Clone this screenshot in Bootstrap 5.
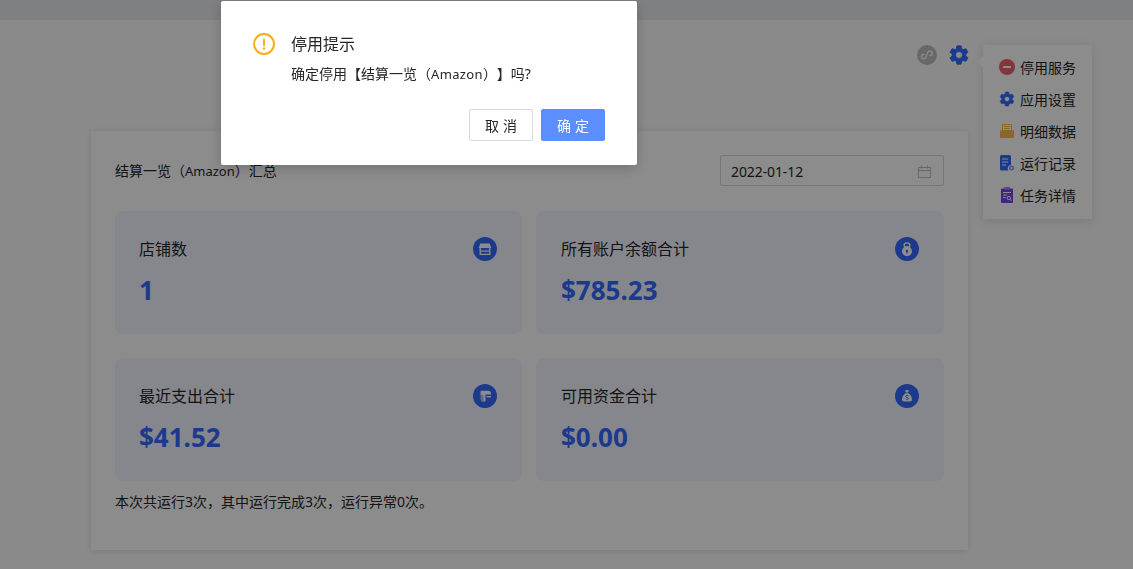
<!DOCTYPE html>
<html lang="zh-CN">
<head>
<meta charset="utf-8">
<title>结算一览（Amazon）汇总</title>
<link href="https://cdn.jsdelivr.net/npm/bootstrap@5.3.0/dist/css/bootstrap.min.css" rel="stylesheet">
<style>
html,body{height:569px;overflow:hidden}
body{background:#fbfbfb;color:#262626;font-family:"Noto Sans","Noto Sans CJK SC",sans-serif;font-size:14px;text-spacing-trim:space-all}
.latinword{font-size:13px}
.confirmtext .latinword{letter-spacing:.35px}
.topstrip{height:20px;background:#e8e9ee}
.shell{margin-left:91px;width:877px}
.toolbar{height:111px;padding-top:25px;gap:12px;margin-right:-1px}
.toolicon{width:20px;height:20px;display:block}
.panelbox{height:419px;background:#fff;box-shadow:0 1px 6px rgba(0,0,0,.12);padding:24px}
.paneltitle{height:32px}
.titletext{margin-top:5px}
.datebox{width:224px;height:31px;border:1px solid #d9d9d9;border-radius:2px;padding:1px 12px 0 10px;color:#262626;letter-spacing:-.1px}
.statgrid{display:grid;grid-template-columns:407px 408px;column-gap:14px;row-gap:24px;margin-top:24px}
.statbox{height:123px;background:#f4f6ff;border-radius:8px;padding:24px 25px 24px 24px}
.statbox:nth-child(even){padding-left:25px}
.statlabel{font-size:16px;line-height:28px;height:28px}
.statvalue{font-size:26px;font-weight:700;color:#3369ff;line-height:36px;margin-top:9px}
.roundicon{width:24px;height:24px;border-radius:50%;background:#3369ff;flex:none;margin-top:2px}
.roundicon svg{width:24px;height:24px;display:block}
.summaryline{margin-top:11px;line-height:20px}
.sidepop{position:absolute;left:983px;top:45px;width:109px;height:174px;background:#fff;box-shadow:0 2px 10px rgba(0,0,0,.12);padding:6px 0 0 16px}
.sidepop::before{content:"";position:absolute;left:-4px;top:13px;width:8px;height:8px;background:#fff;transform:rotate(45deg)}
.sideitem{height:32px;gap:5px;color:#262626}
.sideitem svg{width:16px;height:16px;flex:none}
.maskveil{position:fixed;inset:0;background:rgba(0,0,0,.45)}
.confirmbox{position:fixed;left:221px;top:1px;width:416px;height:164px;background:#fff;border-radius:2px;box-shadow:0 3px 14px rgba(0,0,0,.2);padding:32px;display:flex;flex-direction:column}
.confirmicon{width:22px;height:22px;flex:none;margin-right:16px}
.confirmtitle{font-size:16px;line-height:22px;color:#262626}
.confirmtext{line-height:20px;margin-top:9px;color:#262626}
.actionrow{margin-top:auto;gap:8px;margin-bottom:-8px}
.btnplain,.btnmain{width:64px;height:32px;padding:0;border-radius:2px;font-size:14px;letter-spacing:4px;text-indent:4px;font-family:inherit}
.btnplain{background:#fff;border:1px solid #d9d9d9;color:#262626}
.btnmain{background:#5c8eff;border:1px solid #5c8eff;color:#fff}
</style>
</head>
<body>
<div class="topstrip"></div>
<div class="shell">
  <div class="toolbar d-flex justify-content-end">
    <svg class="toolicon" viewBox="0 0 20 20"><circle cx="10" cy="10" r="10" fill="#bdbdbd"/><path d="M6.900 10.700a2.200 2.200 0 1 0 2.900 2.100V7.200a2.300 2.300 0 1 1 3.100 2.200" transform="rotate(22 10 10)" fill="none" stroke="#fff" stroke-width="1.300" stroke-linecap="round"/></svg>
    <svg class="toolicon" viewBox="1.500 1.500 21 21"><path fill="#3369ff" stroke="#3369ff" stroke-width=".9" stroke-linejoin="round" fill-rule="evenodd" d="M19.140 12.940c.04-.3.06-.61.06-.94 0-.32-.02-.64-.07-.94l2.030-1.580c.18-.14.23-.41.12-.61l-1.920-3.320c-.12-.22-.37-.29-.59-.22l-2.390.96c-.5-.38-1.030-.7-1.620-.94l-.36-2.540c-.04-.24-.24-.41-.48-.41h-3.840c-.24 0-.43.17-.47.41l-.36 2.540c-.59.24-1.130.57-1.620.94l-2.390-.96c-.22-.08-.47 0-.59.22L2.740 8.870c-.12.21-.08.47.12.61l2.030 1.580c-.05.3-.09.63-.09.94s.02.64.07.94l-2.030 1.580c-.18.14-.23.41-.12.61l1.920 3.320c.12.22.37.29.59.22l2.390-.96c.5.38 1.030.7 1.620.94l.36 2.540c.05.24.24.41.48.41h3.840c.24 0 .44-.17.47-.41l.36-2.540c.59-.24 1.130-.56 1.620-.94l2.390.96c.22.08.47 0 .59-.22l1.920-3.320c.12-.22.07-.47-.12-.61l-2.010-1.580zM12 15.600c-1.980 0-3.600-1.620-3.600-3.600s1.620-3.600 3.600-3.600 3.600 1.620 3.600 3.600-1.620 3.600-3.600 3.600z"/></svg>
  </div>
  <div class="panelbox">
    <div class="paneltitle d-flex justify-content-between align-items-start">
      <span class="titletext">结算一览（<span class="latinword">Amazon</span>）汇总</span>
      <div class="datebox d-flex justify-content-between align-items-center">
        <span>2022-01-12</span>
        <svg width="13" height="13" viewBox="0 0 13 13" fill="none" stroke="#bfbfbf"><rect x=".5" y="2.500" width="12" height="10"/><path d="M.5 5.500h12M3.500 .5v3M9.500 .5v3"/></svg>
      </div>
    </div>
    <div class="statgrid">
      <div class="statbox d-flex justify-content-between">
        <div><div class="statlabel">店铺数</div><div class="statvalue">1</div></div>
        <div class="roundicon"><svg viewBox="0 0 24 24"><path fill="#fff" d="M7.300 6.500h9.400l1.600 4.500H5.700z"/><path fill="none" stroke="#fff" stroke-width="1.300" d="M7.200 11v6.300h9.600V11"/><path fill="#fff" d="M7.200 13.500h9.600v1.200H7.200z"/></svg></div>
      </div>
      <div class="statbox d-flex justify-content-between">
        <div><div class="statlabel">所有账户余额合计</div><div class="statvalue">$785.23</div></div>
        <div class="roundicon"><svg viewBox="0 0 24 24"><circle cx="12" cy="14.300" r="5" fill="#fff"/><ellipse cx="12" cy="8.200" rx="2.900" ry="2.300" fill="none" stroke="#fff" stroke-width="1.300"/><circle cx="12" cy="14" r="1.200" fill="#3369ff"/><path stroke="#3369ff" d="M12 14.500v2.200"/></svg></div>
      </div>
      <div class="statbox d-flex justify-content-between">
        <div><div class="statlabel">最近支出合计</div><div class="statvalue">$41.52</div></div>
        <div class="roundicon"><svg viewBox="0 0 24 24"><path fill="#fff" d="M8.500 6.800h6.500a3 3 0 0 1 3 3v.7h-5.500V17.500H9.500A2 2 0 0 1 7.500 15.500V7.800a1 1 0 0 1 1-1z"/><path fill="#fff" d="M13.500 12h4.500v1.400h-4.500z"/><path stroke="#3369ff" stroke-width=".8" d="M7 12h3.500M7 14h3.500M7 16h3.500"/></svg></div>
      </div>
      <div class="statbox d-flex justify-content-between">
        <div><div class="statlabel">可用资金合计</div><div class="statvalue">$0.00</div></div>
        <div class="roundicon"><svg viewBox="0 0 24 24"><path fill="#fff" d="M10 6.300h4l-.8 2.200h-2.400zM10.400 9.300h3.200c2 1.500 3.400 4 3.400 6.200 0 1.300-.8 2-2 2H9c-1.200 0-2-.7-2-2 0-2.200 1.400-4.700 3.400-6.200z"/><path fill="none" stroke="#3369ff" stroke-width=".9" d="M13.300 11.700c-.5-.6-2.500-.6-2.500.6 0 1.400 2.600.8 2.600 2.100 0 1.200-2.100 1.200-2.700.5"/></svg></div>
      </div>
    </div>
    <div class="summaryline">本次共运行3次，其中运行完成3次，运行异常0次。</div>
  </div>
</div>

<div class="sidepop">
  <div class="sideitem d-flex align-items-center"><svg viewBox="0 0 16 16"><circle cx="8" cy="8" r="8" fill="#f0616d"/><rect x="4" y="7" width="8" height="2" rx=".5" fill="#fff"/></svg><span>停用服务</span></div>
  <div class="sideitem d-flex align-items-center"><svg viewBox="1 1 22 22"><path fill="#3369ff" stroke="#3369ff" stroke-width=".9" stroke-linejoin="round" fill-rule="evenodd" d="M19.140 12.940c.04-.3.06-.61.06-.94 0-.32-.02-.64-.07-.94l2.030-1.580c.18-.14.23-.41.12-.61l-1.920-3.320c-.12-.22-.37-.29-.59-.22l-2.390.96c-.5-.38-1.030-.7-1.620-.94l-.36-2.540c-.04-.24-.24-.41-.48-.41h-3.840c-.24 0-.43.17-.47.41l-.36 2.540c-.59.24-1.130.57-1.620.94l-2.390-.96c-.22-.08-.47 0-.59.22L2.740 8.870c-.12.21-.08.47.12.61l2.030 1.580c-.05.3-.09.63-.09.94s.02.64.07.94l-2.030 1.580c-.18.14-.23.41-.12.61l1.920 3.320c.12.22.37.29.59.22l2.390-.96c.5.38 1.030.7 1.620.94l.36 2.540c.05.24.24.41.48.41h3.840c.24 0 .44-.17.47-.41l.36-2.540c.59-.24 1.130-.56 1.620-.94l2.390.96c.22.08.47 0 .59-.22l1.920-3.320c.12-.22.07-.47-.12-.61l-2.010-1.580zM12 15.600c-1.980 0-3.600-1.620-3.600-3.600s1.620-3.600 3.600-3.600 3.600 1.620 3.600 3.600-1.620 3.600-3.600 3.600z"/></svg><span>应用设置</span></div>
  <div class="sideitem d-flex align-items-center"><svg viewBox="0 0 16 16"><path fill="none" stroke="#fdbd3e" d="M3.500 1.500h9v6h-9zM5 3.500h6M5 5.500h6"/><path fill="#fdbd3e" d="M1 7.500h14V15H1z"/></svg><span>明细数据</span></div>
  <div class="sideitem d-flex align-items-center"><svg viewBox="0 0 16 16"><path fill="#3369ff" d="M1 1.500A1.500 1.500 0 0 1 2.500 0h8A1.500 1.500 0 0 1 12 1.500V10a3.300 3.300 0 0 0-2.500 5.500H2.500A1.500 1.500 0 0 1 1 14z"/><path stroke="#fff" d="M3 4h6M3 7h6M3 10h4"/><circle cx="12.500" cy="13" r="2.500" fill="#7f9fff"/><circle cx="12.500" cy="13" r="1" fill="#fff"/></svg><span>运行记录</span></div>
  <div class="sideitem d-flex align-items-center"><svg viewBox="0 0 16 16"><rect x="2" y="1.500" width="12" height="14.500" rx="1" fill="#7a42e8"/><rect x="5" y="0" width="6" height="2.500" rx=".5" fill="#a988f0"/><path stroke="#fff" d="M4 5.500h8M4 8h4M4 10.500h2.500"/><circle cx="9.800" cy="11" r="1.700" fill="none" stroke="#fff"/><path stroke="#fff" d="M11 12.300l1.500 1.500"/></svg><span>任务详情</span></div>
</div>

<div class="maskveil"></div>
<div class="confirmbox" role="dialog">
  <div class="d-flex">
    <svg class="confirmicon" viewBox="0 0 22 22" fill="none"><circle cx="11" cy="11" r="10" stroke="#faad14" stroke-width="2"/><rect x="10" y="5.500" width="2" height="7.500" rx="1" fill="#faad14"/><circle cx="11" cy="15.500" r="1.200" fill="#faad14"/></svg>
    <div>
      <div class="confirmtitle">停用提示</div>
      <div class="confirmtext">确定停用【结算一览（<span class="latinword">Amazon</span>）】吗?</div>
    </div>
  </div>
  <div class="actionrow d-flex justify-content-end">
    <button type="button" class="btnplain">取消</button>
    <button type="button" class="btnmain">确定</button>
  </div>
</div>
<script src="https://cdn.jsdelivr.net/npm/bootstrap@5.3.0/dist/js/bootstrap.bundle.min.js"></script>
</body>
</html>
